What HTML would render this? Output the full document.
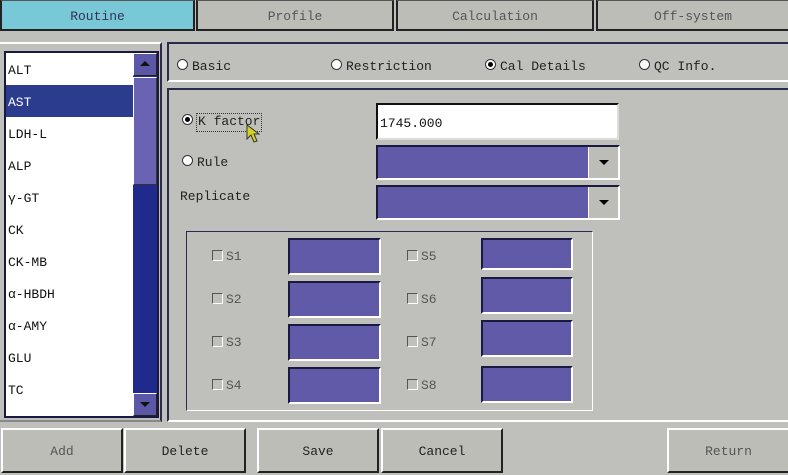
<!DOCTYPE html>
<html><head><meta charset="utf-8"><style>
*{box-sizing:border-box;margin:0;padding:0}
body{width:788px;height:475px;background:#bfbfbb;position:relative;overflow:hidden;font-family:"Liberation Mono",monospace;font-size:13px;color:#111}
.a{position:absolute}
.tab{position:absolute;top:0;height:31px;border:2px solid #222;border-top:1px solid #555;background:#bdbdb8;color:#555;text-align:center;line-height:31px;font-size:13px}
.panel{position:absolute;border:2px solid #2a2a4a;border-right:none}
.btn{position:absolute;top:428px;height:45px;border:2px solid #222;border-top:2px solid #fff;border-left:2px solid #fff;background:#bdbdb8;text-align:center;line-height:44px;font-size:13px;color:#222}
.row{position:absolute;left:8px;height:32px;line-height:33px;font-size:13px}
.pur{position:absolute;background:#605aa8;border:2px solid #1a1a40;border-right-color:#fff;border-bottom-color:#fff}
.radio{position:absolute;width:11px;height:11px;border-radius:50%;background:#fff;border:1px solid #333}
.radio.on::after{content:"";position:absolute;left:2px;top:2px;width:5px;height:5px;border-radius:50%;background:#000}
.cb{position:absolute;width:11px;height:11px;border:1px solid #555;border-right-color:#fff;border-bottom-color:#fff}
.lbl{position:absolute;font-size:13px;color:#222;margin-top:1px}
.s{color:#555}
.dd{position:absolute;width:30px;background:#bdbdb8;border-left:1px solid #fff}
.dd::after{content:"";position:absolute;left:10px;top:13px;border-left:5px solid transparent;border-right:5px solid transparent;border-top:5px solid #000}
</style></head><body>
<div class="tab" style="left:0;width:195px;background:#78c8d8;color:#335">Routine</div>
<div class="tab" style="left:196px;width:198px">Profile</div>
<div class="tab" style="left:396px;width:198px">Calculation</div>
<div class="tab" style="left:596px;width:194px">Off-system</div>

<div class="a" style="left:-2px;top:42px;width:164px;height:380px;border:2px solid #888;border-left:none;border-top-color:#fff;border-right-color:#2a2a4a"></div>
<div class="a" style="left:4px;top:51px;width:155px;height:367px;border:2px solid #1a1a40;background:#fff"></div>
<div class="a" style="left:6px;top:85px;width:127px;height:32px;background:#2b3c8e"></div>
<div class="row" style="top:54px">ALT</div>
<div class="row" style="top:86px;color:#fff">AST</div>
<div class="row" style="top:118px">LDH-L</div>
<div class="row" style="top:150px">ALP</div>
<div class="row" style="top:182px">γ-GT</div>
<div class="row" style="top:214px">CK</div>
<div class="row" style="top:246px">CK-MB</div>
<div class="row" style="top:278px">α-HBDH</div>
<div class="row" style="top:310px">α-AMY</div>
<div class="row" style="top:342px">GLU</div>
<div class="row" style="top:374px">TC</div>
<div class="a" style="left:133px;top:53px;width:24px;height:363px;background:#1f2a8c"></div>
<div class="a" style="left:133px;top:53px;width:24px;height:23px;background:#5d57a8;border:1px solid #fff;border-right-color:#222;border-bottom-color:#222"></div>
<div class="a" style="left:140px;top:61px;border-left:5px solid transparent;border-right:5px solid transparent;border-bottom:5px solid #111"></div>
<div class="a" style="left:133px;top:77px;width:24px;height:108px;background:#6a62b2;border:1px solid #fff;border-right-color:#333;border-bottom-color:#333"></div>
<div class="a" style="left:133px;top:393px;width:24px;height:23px;background:#5d57a8;border:1px solid #fff;border-right-color:#222;border-bottom-color:#222"></div>
<div class="a" style="left:140px;top:402px;border-left:5px solid transparent;border-right:5px solid transparent;border-top:5px solid #111"></div>

<div class="panel" style="left:167px;top:42px;width:625px;height:40px;border-color:#2a2a4a;border-bottom-color:#fff;border-right:none"></div>
<div class="radio" style="left:177px;top:59px"></div><div class="lbl" style="left:192px;top:58px">Basic</div>
<div class="radio" style="left:331px;top:59px"></div><div class="lbl" style="left:346px;top:58px">Restriction</div>
<div class="radio on" style="left:485px;top:59px"></div><div class="lbl" style="left:500px;top:58px">Cal Details</div>
<div class="radio" style="left:639px;top:59px"></div><div class="lbl" style="left:654px;top:58px">QC Info.</div>

<div class="panel" style="left:167px;top:88px;width:625px;height:334px;border-color:#2a2a4a;border-bottom-color:#fff"></div>
<div class="radio on" style="left:182px;top:114px"></div>
<div class="lbl" style="left:196px;top:112px;border:1px dotted #333;padding:0 1px;height:19px">K factor</div>
<svg class="a" style="left:246px;top:124px" width="14" height="20"><path d="M1 1 L1 15 L5 11 L8 18 L11 17 L8 10 L13 10 Z" fill="#d8d020" stroke="#333" stroke-width="1"/></svg>
<div class="a" style="left:376px;top:103px;width:243px;height:37px;background:#fff;border:2px solid #111;border-right-color:#ddd;border-bottom-color:#ddd;padding:11px 2px;font-size:13px">1745.000</div>
<div class="radio" style="left:182px;top:155px"></div><div class="lbl" style="left:197px;top:154px">Rule</div>
<div class="pur" style="left:376px;top:145px;width:244px;height:35px"><div class="dd" style="right:0;top:0;height:31px"></div></div>
<div class="lbl" style="left:180px;top:188px">Replicate</div>
<div class="pur" style="left:376px;top:185px;width:244px;height:35px"><div class="dd" style="right:0;top:0;height:31px"></div></div>

<div class="a" style="left:186px;top:231px;width:407px;height:180px;border:1px solid #2a2a4a;border-right-color:#fff;border-bottom-color:#fff"></div>
<div class="cb" style="left:212px;top:250px"></div><div class="lbl s" style="left:226px;top:248px">S1</div>
<div class="cb" style="left:212px;top:293px"></div><div class="lbl s" style="left:226px;top:291px">S2</div>
<div class="cb" style="left:212px;top:336px"></div><div class="lbl s" style="left:226px;top:334px">S3</div>
<div class="cb" style="left:212px;top:379px"></div><div class="lbl s" style="left:226px;top:377px">S4</div>
<div class="cb" style="left:407px;top:250px"></div><div class="lbl s" style="left:421px;top:248px">S5</div>
<div class="cb" style="left:407px;top:293px"></div><div class="lbl s" style="left:421px;top:291px">S6</div>
<div class="cb" style="left:407px;top:336px"></div><div class="lbl s" style="left:421px;top:334px">S7</div>
<div class="cb" style="left:407px;top:379px"></div><div class="lbl s" style="left:421px;top:377px">S8</div>
<div class="pur" style="left:288px;top:238px;width:93px;height:37px"></div>
<div class="pur" style="left:288px;top:281px;width:93px;height:37px"></div>
<div class="pur" style="left:288px;top:324px;width:93px;height:37px"></div>
<div class="pur" style="left:288px;top:367px;width:93px;height:37px"></div>
<div class="pur" style="left:481px;top:238px;width:92px;height:32px"></div>
<div class="pur" style="left:481px;top:277px;width:92px;height:37px"></div>
<div class="pur" style="left:481px;top:320px;width:92px;height:37px"></div>
<div class="pur" style="left:481px;top:366px;width:92px;height:37px"></div>

<div class="btn" style="left:1px;width:122px;color:#555">Add</div>
<div class="btn" style="left:124px;width:122px">Delete</div>
<div class="btn" style="left:257px;width:122px">Save</div>
<div class="btn" style="left:381px;width:122px">Cancel</div>
<div class="btn" style="left:667px;width:123px;color:#555">Return</div>
</body></html>
